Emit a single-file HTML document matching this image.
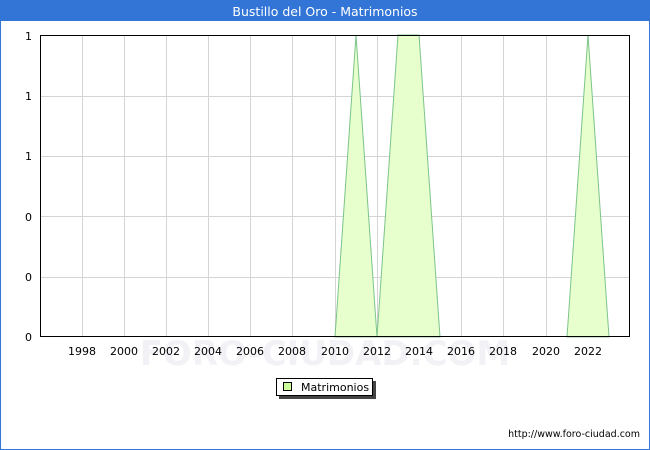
<!DOCTYPE html><html><head><style>body{margin:0}svg{display:block;font-family:"DejaVu Sans","Liberation Sans",sans-serif}</style></head><body>
<svg width="650" height="450" xmlns="http://www.w3.org/2000/svg">
<rect x="0" y="0" width="650" height="450" fill="#fff"/>
<rect x="0.5" y="0.5" width="649" height="449" fill="none" stroke="#3375d6"/>
<rect x="0" y="0" width="650" height="21" fill="#3375d6"/>
<text x="325" y="16" fill="#fff" font-size="12.5" text-anchor="middle">Bustillo del Oro - Matrimonios</text>
<text x="325" y="365" fill="#f2f2f6" font-size="34" text-anchor="middle" font-weight="bold">FORO-CIUDAD.COM</text>
<g stroke="#d4d4d4" stroke-width="1">
<line x1="40" y1="96.5" x2="630" y2="96.5"/><line x1="40" y1="156.5" x2="630" y2="156.5"/><line x1="40" y1="216.5" x2="630" y2="216.5"/><line x1="40" y1="277.5" x2="630" y2="277.5"/>
<line x1="82.5" y1="35" x2="82.5" y2="337"/><line x1="124.5" y1="35" x2="124.5" y2="337"/><line x1="166.5" y1="35" x2="166.5" y2="337"/><line x1="208.5" y1="35" x2="208.5" y2="337"/><line x1="250.5" y1="35" x2="250.5" y2="337"/><line x1="292.5" y1="35" x2="292.5" y2="337"/><line x1="335.5" y1="35" x2="335.5" y2="337"/><line x1="377.5" y1="35" x2="377.5" y2="337"/><line x1="419.5" y1="35" x2="419.5" y2="337"/><line x1="461.5" y1="35" x2="461.5" y2="337"/><line x1="503.5" y1="35" x2="503.5" y2="337"/><line x1="546.5" y1="35" x2="546.5" y2="337"/><line x1="588.5" y1="35" x2="588.5" y2="337"/>
</g>
<g fill="#e6ffcc" stroke="#7cc48a" stroke-width="1">
<polygon points="335,337 356,35 377,337"/>
<polygon points="377,337 398,35 419,35 440,337"/>
<polygon points="567,337 588,35 609,337"/>
</g>
<rect x="40.5" y="35.5" width="589" height="301" fill="none" stroke="#000"/>
<g font-size="11" fill="#000" text-anchor="end">
<text x="32" y="40">1</text><text x="32" y="100">1</text><text x="32" y="160">1</text><text x="32" y="221">0</text><text x="32" y="281">0</text><text x="32" y="341">0</text>
</g>
<g font-size="11" fill="#000" text-anchor="middle">
<text x="82" y="355">1998</text><text x="124" y="355">2000</text><text x="166" y="355">2002</text><text x="208" y="355">2004</text><text x="250" y="355">2006</text><text x="292" y="355">2008</text><text x="335" y="355">2010</text><text x="377" y="355">2012</text><text x="419" y="355">2014</text><text x="461" y="355">2016</text><text x="503" y="355">2018</text><text x="546" y="355">2020</text><text x="588" y="355">2022</text>
</g>
<rect x="279" y="381" width="97" height="18" fill="#444"/>
<rect x="276.5" y="378.5" width="96" height="17" fill="#fff" stroke="#000"/>
<rect x="283.5" y="382.5" width="8" height="8" fill="#ccff99" stroke="#000"/>
<text x="301" y="391" font-size="11">Matrimonios</text>
<text x="640" y="437" font-size="9.5" text-anchor="end">http://www.foro-ciudad.com</text>
</svg></body></html>
